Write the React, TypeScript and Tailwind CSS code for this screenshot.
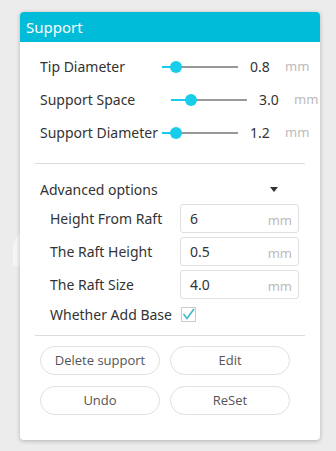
import React from "react";

const font = { fontFamily: '"Noto Sans", "Open Sans", sans-serif' };

type SliderRow = {
  label: string;
  labelWidth: string;
  fill: string;
  value: string;
};

const sliders: SliderRow[] = [
  { label: "Tip Diameter", labelWidth: "w-[122px]", fill: "w-[14px]", value: "0.8" },
  { label: "Support Space", labelWidth: "w-[131px]", fill: "w-[20px]", value: "3.0" },
  { label: "Support Diameter", labelWidth: "w-[122px]", fill: "w-[14px]", value: "1.2" },
];

const fields = [
  { label: "Height From Raft", value: "6" },
  { label: "The Raft Height", value: "0.5" },
  { label: "The Raft Size", value: "4.0" },
];

function Slider({ row }: { row: SliderRow }) {
  return (
    <div className="flex h-[33px] items-center pl-[5px]">
      <span className={`${row.labelWidth} shrink-0 whitespace-nowrap text-[14px] text-[#333]`}>
        {row.label}
      </span>
      <div className="relative flex h-3 w-[76px] shrink-0 items-center">
        <div className="h-[2px] w-full bg-[#999]" />
        <div className={`absolute left-0 top-[5px] h-[2px] ${row.fill} bg-[#18cde9]`} />
        <div
          className={`absolute top-0 h-3 w-3 rounded-full bg-[#18cde9] ${
            row.fill === "w-[20px]" ? "left-[14px]" : "left-[8px]"
          }`}
        />
      </div>
      <span className="ml-3 w-[35px] shrink-0 text-[14px] text-[#333]">{row.value}</span>
      <span className="shrink-0 text-[13px] text-[#bbb]">mm</span>
    </div>
  );
}

export default function App() {
  return (
    <div className="relative h-[451px] w-[336px] overflow-hidden bg-[#ececec] px-5 pt-3" style={font}>
      {/* faint arrow behind the panel */}
      <svg className="absolute left-[11px] top-[232px]" width="10" height="34" viewBox="0 0 10 34">
        <polygon points="9,0 9,34 2,34 2,12" fill="#f5f5f5" />
      </svg>

      <div className="relative flex h-[428px] w-[300px] flex-col overflow-hidden rounded bg-white shadow-[0_1px_4px_rgba(0,0,0,0.25)]">
        <div className="flex h-[30px] shrink-0 items-center bg-[#00bcd8] px-[6px] text-[15px] text-white">
          Support
        </div>

        <div className="flex flex-col px-[15px] pt-2">
          {sliders.map((row) => (
            <Slider key={row.label} row={row} />
          ))}

          <div className="mt-[14px] h-px bg-[#dcdcdc]" />

          <div className="mt-3 flex h-[26px] items-center justify-between pl-[5px] pr-[27px]">
            <span className="text-[14px] text-[#333]">Advanced options</span>
            <svg width="8" height="5" viewBox="0 0 8 5">
              <polygon points="0,0 8,0 4,5" fill="#333" />
            </svg>
          </div>

          <div className="mt-[2px] flex flex-col gap-1 pl-[15px]">
            {fields.map((f) => (
              <div key={f.label} className="flex h-[29px] items-center">
                <span className="w-[130px] shrink-0 text-[14px] text-[#333]">{f.label}</span>
                <div className="flex h-full w-[119px] items-center justify-between rounded-[3px] border border-[#e0e0e0] pl-[9px] pr-[6px]">
                  <span className="text-[14px] text-[#333]">{f.value}</span>
                  <span className="mt-[4px] text-[13px] text-[#bbb]">mm</span>
                </div>
              </div>
            ))}
            <div className="flex h-[22px] items-center">
              <span className="w-[131px] shrink-0 text-[14px] text-[#333]">Whether Add Base</span>
              <div className="flex h-[15px] w-[15px] items-center justify-center border border-[#ccc]">
                <svg width="13" height="12" viewBox="0 0 13 12">
                  <polyline points="1.5,6 5,10.5 12,1" fill="none" stroke="#3ab7c9" strokeWidth="1.6" />
                </svg>
              </div>
            </div>
          </div>

          <div className="mt-[10px] h-px bg-[#dcdcdc]" />

          <div className="mt-[10px] grid grid-cols-[120px_120px] gap-x-[10px] gap-y-[11px] pl-[5px]">
            {["Delete support", "Edit", "Undo", "ReSet"].map((b) => (
              <button
                key={b}
                className="h-[29px] rounded-full border border-[#e0e0e0] bg-white text-[13px] font-normal text-[#555]"
                style={{ fontFamily: '"Open Sans", "Noto Sans", sans-serif' }}
              >
                {b}
              </button>
            ))}
          </div>
        </div>
      </div>
    </div>
  );
}
